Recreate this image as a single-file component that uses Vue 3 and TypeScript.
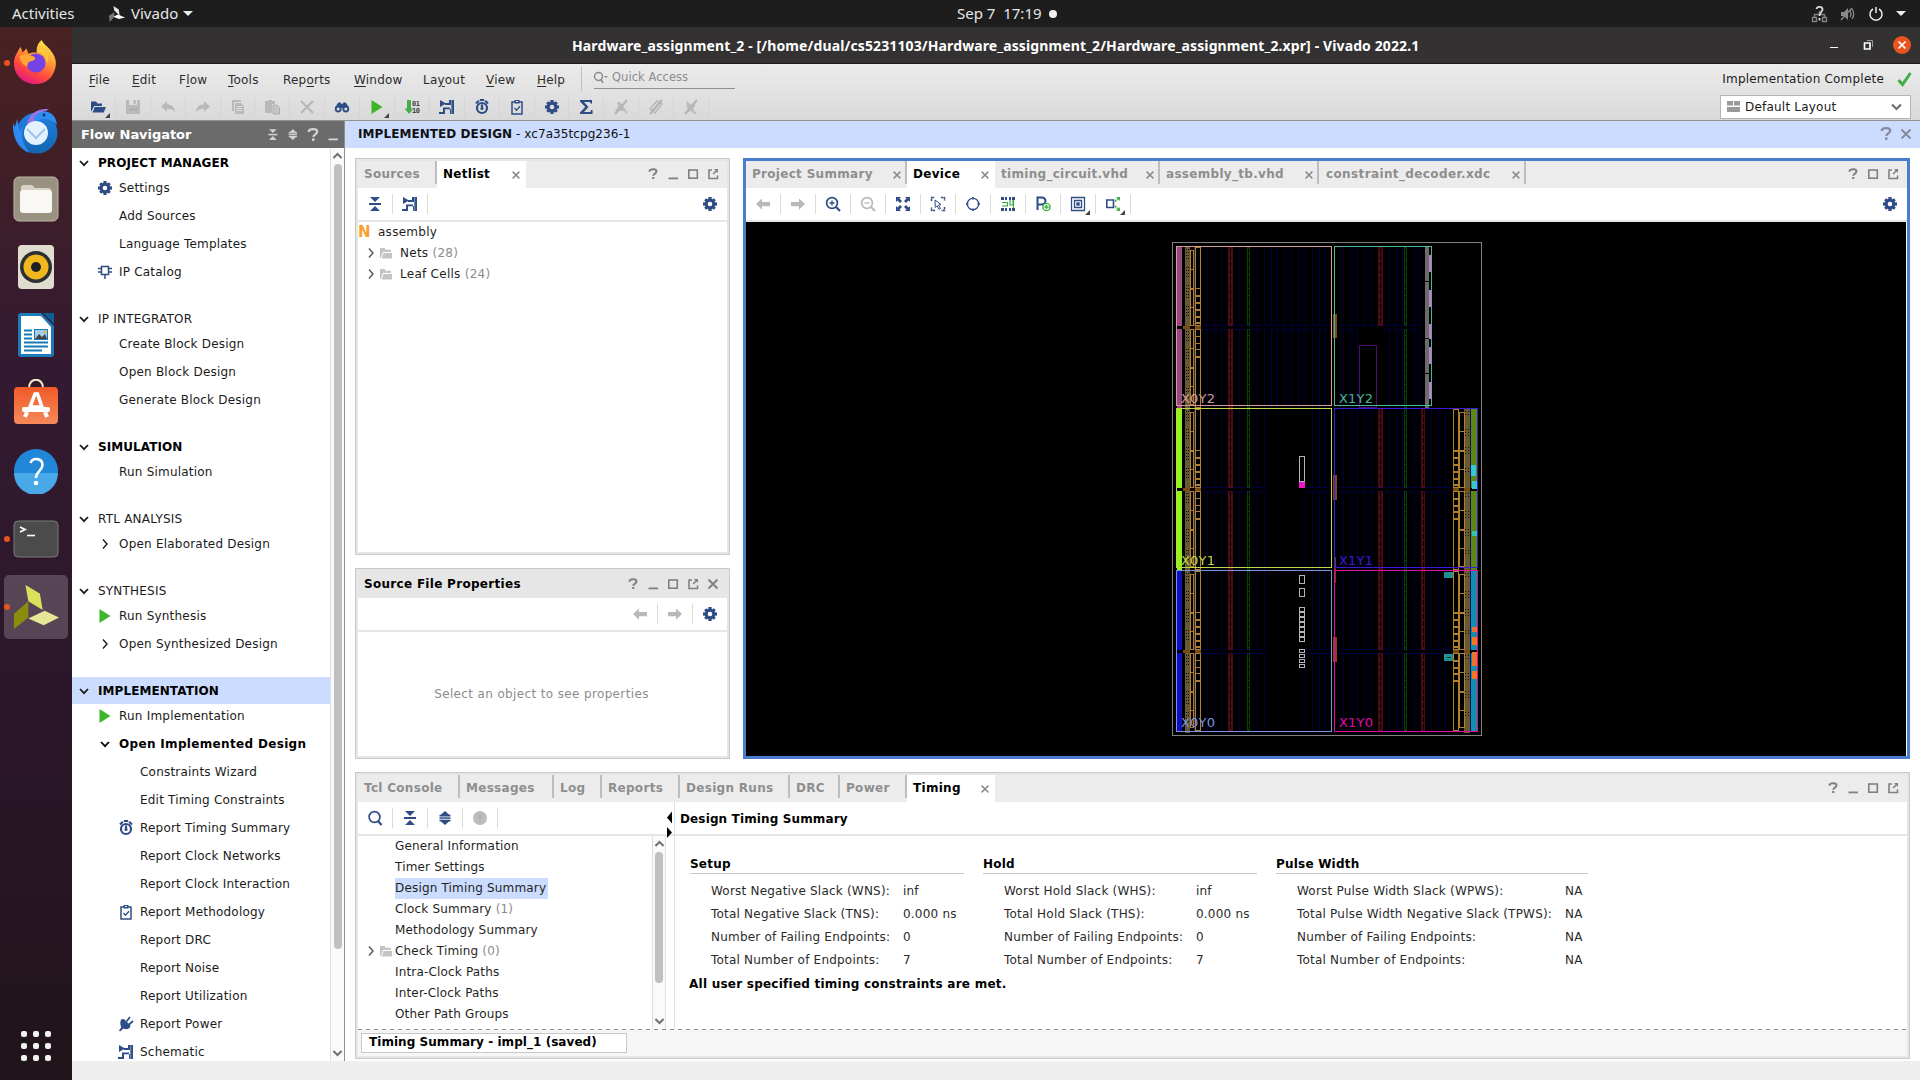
<script setup lang="ts">
const navy = '#2f4d85'
const gear = (c: string) =>
  `<g fill="${c}"><path fill-rule="evenodd" d="M8 2.6a5.4 5.4 0 1 1 0 10.8a5.4 5.4 0 0 1 0-10.8zM8 5.7a2.3 2.3 0 1 0 0 4.6a2.3 2.3 0 0 0 0-4.6z"/><rect x="6.4" y="1" width="3.2" height="3"/><rect x="6.4" y="12" width="3.2" height="3"/><rect x="1" y="6.4" width="3" height="3.2"/><rect x="12" y="6.4" width="3" height="3.2"/><g transform="rotate(45 8 8)"><rect x="6.5" y="1.2" width="3" height="3"/><rect x="6.5" y="11.8" width="3" height="3"/><rect x="1.2" y="6.5" width="3" height="3"/><rect x="11.8" y="6.5" width="3" height="3"/></g></g>`
const collapse = (c: string) => `<g fill="${c}"><path d="M3 1h10L8 6zM3 15h10L8 10z"/><rect x="2" y="7" width="12" height="2"/></g>`
const expand = (c: string) => `<g fill="${c}"><path d="M3.5 5L8 1l4.500 4zM3.500 11h9L8 15z"/><rect x="2.500" y="4.800" width="11" height="1.700"/><rect x="2.500" y="7.300" width="11" height="1.500"/><rect x="2.500" y="9.700" width="11" height="1.700"/></g>`
const arrow = `<path d="M1 8l6-5.500v3.500h8v4.200H7v3.500z" fill="#b9b9b9"/>`
const icons: Record<string, string> = {
  gear: gear(navy),
  collapse: collapse(navy),
  expand: expand(navy),
  collapseLight: `<g transform="translate(1.800 1.500) scale(.76)">${collapse('#d4d4d4')}</g>`,
  expandLight: `<g transform="translate(1.800 1.500) scale(.76)">${expand('#d4d4d4')}</g>`,
  open: `<g fill="${navy}"><path d="M1 13V2.500h5l1.500 2H12V7H4.200z"/><path d="M4.800 8H16l-2.300 5.600H2.500z"/></g>`,
  save: `<g fill="#b9b9b9"><path d="M1 1h3v5h8V1h3v14H1z"/><rect x="8.500" y="1" width="2.300" height="4"/></g><rect x="4" y="10" width="8" height="1" fill="#a8a8a8"/>`,
  undo: `<path d="M1 7.500L7 2v3.500c5 0 7.500 2.500 8 7.500c-2-2.500-4-3.300-8-3.300v3z" fill="#b9b9b9"/>`,
  redo: `<path d="M15 7.500L9 2v3.500c-5 0-7.500 2.500-8 7.500c2-2.500 4-3.300 8-3.300v3z" fill="#b9b9b9"/>`,
  copy: `<path d="M2 1h9v2H4v9H2z" fill="#b9b9b9"/><path d="M5 4h6l3 3v8H5z" fill="#b9b9b9"/><path d="M6.500 7.500h6M6.500 9.500h6M6.500 11.500h6" stroke="#dcdcdc"/>`,
  paste: `<path d="M1 2h3V1h4v1h3v3H8v9H1z" fill="#b9b9b9"/><path d="M9 6h4l2.500 2.500V15H9z" fill="#c4c4c4" stroke="#b0b0b0"/>`,
  del: `<path d="M2 2l12 12M14 2L2 14" stroke="#b5b5b5" stroke-width="2"/>`,
  find: `<g fill="${navy}"><path d="M3.500 4.500Q6.500 2 7.500 5h1Q9.500 2 12.500 4.500L15 9H1z"/><circle cx="4.200" cy="10" r="3.400"/><circle cx="11.800" cy="10" r="3.400"/></g><circle cx="4.200" cy="10" r="1.500" fill="#e2e2e2"/><circle cx="11.800" cy="10" r="1.500" fill="#e2e2e2"/>`,
  run: `<path d="M2.500 1l11 7l-11 7z" fill="#3fb52c"/>`,
  bits: `<path d="M3 1h4v8.500h2.500L5 15L.5 9.500H3z" fill="#44ae4c"/><text x="8" y="7" font-size="7" font-weight="bold" font-family="DejaVu Sans Mono" letter-spacing="-.4" fill="#444">01</text><text x="8" y="14" font-size="7" font-weight="bold" font-family="DejaVu Sans Mono" letter-spacing="-.4" fill="#444">10</text>`,
  schematic: `<g fill="${navy}"><path d="M1 1l6 3.500l-6 3.500z"/><path d="M10 1h5v14h-4v-5h1V6h-6V4h4z"/><path d="M0 13h4V8.500h7v1.800H6V15H0z"/></g><rect x="12.300" y="1" width=".8" height="14" fill="#fff" opacity=".5"/>`,
  timer: `<circle cx="8" cy="9" r="5" fill="none" stroke="${navy}" stroke-width="2.200"/><path d="M8 5.500V10M5.800 1h4.400M2 4.500L4.800 1.800M14 4.500L11.200 1.800" stroke="${navy}" stroke-width="2.200"/><circle cx="8" cy="9.500" r="1.500" fill="${navy}"/>`,
  clip: `<path d="M3 3h10v12H3z" fill="none" stroke="${navy}" stroke-width="1.500"/><rect x="5.500" y="1" width="5" height="3.500" fill="${navy}"/><rect x="7" y="2" width="2" height="1" fill="#fff"/><path d="M5.500 9l2 2.200l3.500-4" fill="none" stroke="${navy}" stroke-width="1.300"/>`,
  sigma: `<path d="M2 1h12v3.500h-1.500L12 3H6l4.500 5L6 13h6.500l.5-2h1.500V15H2v-1.500L7.200 8L2 2.500z" fill="${navy}"/>`,
  off1: `<g fill="#bcbcbc"><path d="M4 3h3l4 5v4H2l3-4z"/></g><path d="M2 15L14 1" stroke="#b4b4b4" stroke-width="2"/><path d="M10 9l4 5" stroke="#bcbcbc" stroke-width="2"/>`,
  off2: `<path d="M2 10L9 2l5 3l-7 9zM4 12l8-9" fill="none" stroke="#b8b8b8" stroke-width="1.500"/><path d="M2 15L14 1" stroke="#b4b4b4" stroke-width="2"/>`,
  off3: `<path d="M3 2l3 2l3 2l3-4v5l-2 3l4 5h-3l-3-3l-3 1z" fill="#bcbcbc"/><path d="M2 15L14 1" stroke="#b4b4b4" stroke-width="2"/>`,
  ip: `<path d="M4.500 2.500h7v8h-7zM8 10.500V15M1 4.500h3M12 4.500h3M1 8h3M12 8h3" fill="none" stroke="${navy}" stroke-width="1.500"/>`,
  plug: `<path d="M3 3.500L6 3l6.500 6.500c0 3-4 5-7 3L2 15.500L1 14.500l2.300-3.200c-1.500-3-1-6-.3-7.800z" fill="${navy}"/><path d="M8.500 5.500l3.500-4.500M11 8.500l4-3.500" stroke="${navy}" stroke-width="1.800"/>`,
  folder: `<g fill="#c4c4c4"><path d="M1 13V3h4.500l1.300 1.700H12V7H3.800L2 13z"/><path d="M4.500 8H13v5.500H2.800z"/></g>`,
  left: arrow,
  right: `<g transform="matrix(-1 0 0 1 16 0)">${arrow}</g>`,
  zoomIn: `<circle cx="7" cy="7" r="5.400" fill="none" stroke="${navy}" stroke-width="1.700"/><path d="M4.500 7h5M7 4.500v5" stroke="${navy}" stroke-width="1.300"/><path d="M11 11l4 4" stroke="${navy}" stroke-width="2.200"/>`,
  zoomOut: `<circle cx="7" cy="7" r="5.400" fill="none" stroke="#b9b9b9" stroke-width="1.700"/><path d="M4.500 7h5" stroke="#b9b9b9" stroke-width="1.300"/><path d="M11 11l4 4" stroke="#b9b9b9" stroke-width="2.200"/>`,
  search: `<circle cx="7.500" cy="7" r="5.400" fill="none" stroke="${navy}" stroke-width="1.700"/><path d="M11 11l3.500 4" stroke="${navy}" stroke-width="2.200"/>`,
  fit: `<g fill="${navy}"><path d="M1 1h5L4.500 2.500L7 5L5 7L2.500 4.500L1 6zM15 1v5l-1.500-1.500L11 7L9 5l2.500-2.500L10 1zM1 15v-5l1.500 1.500L5 9l2 2l-2.500 2.500L6 15zM15 15h-5l1.500-1.500L9 11l2-2l2.500 2.500L15 10z"/></g><rect x="6" y="6" width="4" height="4" fill="#fff"/>`,
  fitSel: `<path d="M1.500 5V1.500H5M11 1.500h3.500V5M14.500 11v3.500H11M5 14.500H1.500V11" fill="none" stroke="${navy}" stroke-width="1.500" stroke-dasharray="2.500 .8"/><path d="M5 4l6 4.500l-2.500.5l2 3.500l-1.500.8l-2-3.500L5.300 11.500z" fill="#fff" stroke="${navy}"/>`,
  target: `<circle cx="8" cy="8" r="5.700" fill="none" stroke="${navy}" stroke-width="1.300"/><path d="M8 1v4M8 11v4M1 8h4M11 8h4" stroke="${navy}" stroke-width="1.500"/><circle cx="8" cy="8" r="4.600" fill="#fff"/>`,
  route: `<g fill="${navy}"><path d="M1 1h3v3H1zM5 1h2v3H5zM9 1h2v3H9zM12 1h3v3h-3zM1 12h3v3H1zM5 12h2v3H5zM9 12h2v3H9zM12 12h3v3h-3z"/></g><path d="M2 6.500h5.500V10H2M10 4v5h3V4M13.500 4v8" fill="none" stroke="#3ca84a" stroke-width="1.200"/>`,
  pblock: `<path d="M2.500 14V1.500H7a3.300 3.300 0 0 1 0 7H3" fill="none" stroke="${navy}" stroke-width="2"/><circle cx="11.500" cy="11" r="3.600" fill="#fff" stroke="#3fae49" stroke-width="1.400"/><path d="M9.300 11h4.400M11.500 8.800v4.400" stroke="#3fae49" stroke-width="1.500"/>`,
  layers: `<path d="M1.500 1.500h13v13h-13zM4.500 4.500h7v7h-7z" fill="none" stroke="${navy}" stroke-width="1.300"/><rect x="6.300" y="6.300" width="3.400" height="3.400" fill="${navy}"/>`,
  expandSel: `<path d="M1.800 4h6.700v7.500H1.800z" fill="none" stroke="${navy}" stroke-width="1.600"/><path d="M10 5.500l3-3M10 10l3 3" stroke="#3fae49" stroke-width="1.600" stroke-dasharray="2 .7"/><path d="M11 1h4v4zM11 15h4v-4z" fill="#3fae49"/>`,
  alert: `<circle cx="8" cy="8" r="7" fill="#bdbdbd"/><path d="M8 4v5M8 10.500v1.500" stroke="#aaa" stroke-width="1.500"/>`,
  help: `<path d="M4.500 5.800V5.200C5 2.800 11.500 2.600 11.500 5.500C11.500 7.500 8.300 7.600 8.200 9.800" fill="none" stroke="currentColor" stroke-width="2"/><rect x="7.100" y="11" width="2.200" height="2" fill="currentColor"/>`,
  helpBig: `<path d="M3.800 5V4.500C4.300 1.500 12.200 1.300 12.200 4.800C12.200 7.200 8.500 7.400 8.300 9.800" fill="none" stroke="currentColor" stroke-width="2.300"/><rect x="7" y="11.400" width="2.600" height="2.400" fill="currentColor"/>`,
  min: `<rect x="3.500" y="11.500" width="9.500" height="1.800" fill="currentColor"/>`,
  max: `<rect x="3.800" y="4" width="8.500" height="8.200" fill="none" stroke="currentColor" stroke-width="1.600"/>`,
  pop: `<path d="M7 4H4v8.500h8.500V9.500" fill="none" stroke="currentColor" stroke-width="1.600"/><path d="M9 3h4v4l-1.500-1.500L8.800 8.600L7.600 7.400l2.900-2.900z" fill="currentColor"/>`,
  close: `<path d="M3.500 3.500l9 9M12.500 3.500l-9 9" stroke="currentColor" stroke-width="1.900"/>`,
  down: `<path d="M4 6l4 4.200L12 6" fill="none" stroke="currentColor" stroke-width="1.800"/>`,
  next: `<path d="M6 3.500l4 4.500l-4 4.500" fill="none" stroke="currentColor" stroke-width="1.400"/>`,
  up: `<path d="M3 10.500L8 5.500l5 5" fill="none" stroke="currentColor" stroke-width="2.400"/>`,
  dn: `<path d="M3 5.500L8 10.500l5-5" fill="none" stroke="currentColor" stroke-width="2.400"/>`,
}

const menus = [
  { a: '', k: 'F', b: 'ile', w: 43 }, { a: '', k: 'E', b: 'dit', w: 47 }, { a: 'F', k: 'l', b: 'ow', w: 49 },
  { a: '', k: 'T', b: 'ools', w: 55 }, { a: 'Rep', k: 'o', b: 'rts', w: 71 }, { a: '', k: 'W', b: 'indow', w: 69 },
  { a: 'La', k: 'y', b: 'out', w: 63 }, { a: '', k: 'V', b: 'iew', w: 51 }, { a: '', k: 'H', b: 'elp', w: 44 },
]
const mainTools = ['open', 'save', 'undo', 'redo', 'copy', 'paste', 'del', 'find', 'run', 'bits', 'schematic', 'timer', 'clip', 'gear', 'sigma', 'off1', 'off2', 'off3']
const devTools = ['left', 'right', 'zoomIn', 'zoomOut', 'fit', 'fitSel', 'target', 'route', 'pblock', 'layers', 'expandSel']

interface NavItem { t: string; i?: string; b?: boolean; s?: boolean }
const nav: { t: string; b?: boolean; sel?: boolean; items: NavItem[] }[] = [
  { t: 'PROJECT MANAGER', b: true, items: [{ t: 'Settings', i: 'gear' }, { t: 'Add Sources' }, { t: 'Language Templates' }, { t: 'IP Catalog', i: 'ip' }] },
  { t: 'IP INTEGRATOR', items: [{ t: 'Create Block Design' }, { t: 'Open Block Design' }, { t: 'Generate Block Design' }] },
  { t: 'SIMULATION', b: true, items: [{ t: 'Run Simulation' }] },
  { t: 'RTL ANALYSIS', items: [{ t: 'Open Elaborated Design', i: 'next' }] },
  { t: 'SYNTHESIS', items: [{ t: 'Run Synthesis', i: 'run' }, { t: 'Open Synthesized Design', i: 'next' }] },
  {
    t: 'IMPLEMENTATION', b: true, sel: true, items: [
      { t: 'Run Implementation', i: 'run' }, { t: 'Open Implemented Design', i: 'down', b: true },
      { t: 'Constraints Wizard', s: true }, { t: 'Edit Timing Constraints', s: true }, { t: 'Report Timing Summary', s: true, i: 'timer' },
      { t: 'Report Clock Networks', s: true }, { t: 'Report Clock Interaction', s: true }, { t: 'Report Methodology', s: true, i: 'clip' },
      { t: 'Report DRC', s: true }, { t: 'Report Noise', s: true }, { t: 'Report Utilization', s: true },
      { t: 'Report Power', s: true, i: 'plug' }, { t: 'Schematic', s: true, i: 'schematic' },
    ],
  },
]

interface Tab { t: string; w: number; on?: boolean; x?: boolean; sep?: boolean }
const netTabs: Tab[] = [{ t: 'Sources', w: 79, sep: true }, { t: 'Netlist', w: 89, on: true, x: true }]
const devTabs: Tab[] = [
  { t: 'Project Summary', w: 161, x: true, sep: true }, { t: 'Device', w: 88, on: true, x: true },
  { t: 'timing_circuit.vhd', w: 165, x: true, sep: true }, { t: 'assembly_tb.vhd', w: 159, x: true, sep: true }, { t: 'constraint_decoder.xdc', w: 207, x: true, sep: true },
]
const botTabs: Tab[] = [
  { t: 'Tcl Console', w: 102, sep: true }, { t: 'Messages', w: 94, sep: true }, { t: 'Log', w: 48, sep: true }, { t: 'Reports', w: 78, sep: true },
  { t: 'Design Runs', w: 110, sep: true }, { t: 'DRC', w: 50, sep: true }, { t: 'Power', w: 67, sep: true }, { t: 'Timing', w: 88, on: true, x: true },
]
const timingTree = [
  { t: 'General Information' }, { t: 'Timer Settings' }, { t: 'Design Timing Summary', sel: true }, { t: 'Clock Summary', n: '(1)' },
  { t: 'Methodology Summary' }, { t: 'Check Timing', n: '(0)', f: true }, { t: 'Intra-Clock Paths' }, { t: 'Inter-Clock Paths' }, { t: 'Other Path Groups' },
]
const summary = [
  { t: 'Setup', w: 274, l: 192, rows: [['Worst Negative Slack (WNS):', 'inf'], ['Total Negative Slack (TNS):', '0.000 ns'], ['Number of Failing Endpoints:', '0'], ['Total Number of Endpoints:', '7']] },
  { t: 'Hold', w: 274, l: 192, rows: [['Worst Hold Slack (WHS):', 'inf'], ['Total Hold Slack (THS):', '0.000 ns'], ['Number of Failing Endpoints:', '0'], ['Total Number of Endpoints:', '7']] },
  { t: 'Pulse Width', w: 312, l: 268, rows: [['Worst Pulse Width Slack (WPWS):', 'NA'], ['Total Pulse Width Negative Slack (TPWS):', 'NA'], ['Number of Failing Endpoints:', 'NA'], ['Total Number of Endpoints:', 'NA']] },
]

/* Device floorplan: six clock regions, each split in two half-rows. */
interface R { x: number; y: number; w: number; h: number; f?: string; s?: string }
const fills: R[] = []
const outlines: R[] = []
const fill = (x: number, y: number, w: number, h: number, f: string) => fills.push({ x, y, w, h, f })
const box = (x: number, y: number, w: number, h: number, s: string) => outlines.push({ x: x + 0.5, y: y + 0.5, w: w - 1, h: h - 1, s })
const halves = [[247, 326], [329, 408], [409, 488], [491, 570], [571, 650], [653, 731]]
const leftBar = ['#9b4884', '#9b4884', '#92f41a', '#92f41a', '#0f0fbe', '#0f0fbe']
const amber = '#b0802c'
halves.forEach(([y0, y1], i) => {
  const h = y1 - y0
  const top = i < 2
  const xs = top ? [1207, 1214, 1221, 1239, 1257, 1264, 1271, 1277, 1284, 1291, 1298, 1305, 1312, 1319, 1325] : [1207, 1214, 1221, 1239, 1257, 1264, 1312, 1319, 1325]
  if (i === 3 || i === 5) xs.push(1305)
  const rx = top ? [1343, 1350, 1357, 1364, 1371, 1389, 1396, 1402, 1414, 1420] : [1343, 1350, 1357, 1364, 1371, 1389, 1396, 1402, 1414, 1431, 1438, 1445]
  for (const x of xs.concat(rx)) if (!(i === 1 && x > 1357 && x < 1380)) fill(x, y0, 1, h, '#00003c')
  const yy = i % 2 ? y0 : y1 - 1
  fill(1201, yy, top ? 130 : 64, 1, '#00003c')
  if (!top) fill(1305, yy, 26, 1, '#00003c')
  if (i === 1) { fill(1337, yy, 20, 1, '#00003c'); fill(1382, yy, 39, 1, '#00003c') } else fill(1337, yy, top ? 84 : 116, 1, '#00003c')
  fill(1177, y0, 5, h, leftBar[i])
  fill(1194, y0, 1, h, '#28285c')
  fill(1185, y0 - 1, 5, h + 3, '#655936')
  for (let y = y0 + 2; y < y1 - 2; y += 3) if ((y - y0) % 19 < 13) { fill(1186, y, 1, 1, '#0c0a06'); fill(1188, y, 1, 1, '#0c0a06') }
  for (const x of [1228, 1378].concat(top ? [] : [1421])) {
    if (i === 1 && x === 1378) continue
    fill(x, y0, x === 1421 ? 4 : 5, h, '#4a0a16')
    for (let y = y0 + 1; y < y1 - 3; y += 7) fill(x + 2, y, 1, 5, '#080003')
  }
  for (const x of [1247, 1404]) {
    box(x, y0, 3, h, '#083f08')
    for (let y = y0 + 6; y < y1; y += 7) fill(x, y, 3, 1, '#0a420a')
  }
  const odd = i % 2 === 1
  box(1190, odd ? y0 : y0 + 3, 4, h - 3, amber)
  for (const d of [22, 41, 60]) fill(1190, y0 + d - (odd ? 3 : 0), 4, d === 41 ? 2 : 1, amber)
  box(1195, y0, 6, h, amber)
  for (const d of odd ? [7, 14, 20, 27] : [41, 48, 55, 62, 69, 75]) fill(1195, y0 + d, 6, d > 47 || d === 27 ? 2 : 1, amber)
  if (!top) {
    box(1453, y0, 6, h, amber)
    for (const d of odd ? [7, 14, 20, 27] : [41, 48, 55, 62, 69, 75]) fill(1453, y0 + d, 6, 2, amber)
    box(1459, odd ? y0 : y0 + 3, 6, h - 3, amber)
    for (const d of [22, 41, 60]) fill(1459, y0 + d - (odd ? 3 : 0), 5, d === 41 ? 2 : 1, amber)
    fill(1464, y0 - 1, 6, h + 3, '#655936')
    for (let y = y0 + 2; y < y1 - 3; y += 3) if ((y - y0) % 19 < 8) { fill(1465, y, 1, 1, '#0c0a06'); fill(1468, y, 1, 1, '#0c0a06') }
    fill(1471, y0, 6, h, i < 4 ? '#5c8812' : '#128fac')
    fill(1470, y0, 1, h, '#111160')
  }
})
for (const y of [326, 488, 650]) {
  fill(1177, y, 7, y === 326 ? 3 : 2, '#000')
  fill(1183, y, 7, 3, '#7a4a10')
  fill(1195, y, 6, 3, '#7a4a10')
  if (y > 400) { fill(1453, y, 6, 3, '#7a4a10'); fill(1464, y, 6, 3, '#7a4a10'); fill(1471, y, 6, 2, '#000') }
}
fill(1425, 247, 4, 34, '#6c6c6c'); fill(1425, 282, 4, 56, '#6c6c6c'); fill(1425, 339, 4, 34, '#6c6c6c'); fill(1425, 374, 4, 34, '#6c6c6c')
for (const y of [255, 290, 324, 347, 382]) fill(1429, y, 2, y === 324 ? 15 : 17, '#d874cf')
fill(1333, 314, 4, 24, '#7a4a18'); fill(1333, 475, 4, 25, '#7a4a18'); fill(1334, 557, 2, 26, '#6a3a30'); fill(1333, 637, 4, 25, '#8a4020')
box(1359, 345, 18, 63, '#4c0c6c')
box(1299, 456, 6, 26, '#b4b4b4')
fill(1299, 481, 6, 7, '#f414c8')
box(1299, 575, 6, 9, '#b4b4b4'); box(1299, 588, 6, 9, '#b4b4b4')
for (let n = 0; n < 7; n++) box(1299, 607 + n * 5, 6, 5, '#b4b4b4')
for (let n = 0; n < 4; n++) box(1299, 649 + n * 5, 6, 4, '#b4b4b4')
fill(1444, 572, 10, 6, '#219090'); fill(1444, 654, 10, 7, '#219090'); fill(1447, 657, 4, 1, '#063838')
fill(1471, 465, 5, 11, '#34c8cc'); fill(1472, 481, 5, 8, '#34c8cc'); fill(1472, 531, 5, 5, '#34c8a8')
fill(1472, 627, 5, 5, '#e8762a'); fill(1472, 637, 5, 8, '#f47818'); fill(1472, 652, 5, 14, '#e8762a'); fill(1472, 671, 5, 8, '#f47818')

const regions = [
  { n: 'X0Y2', x: 1176, y: 246, w: 156, h: 160, b: 403, c: '#d69c96' }, { n: 'X1Y2', x: 1334, y: 246, w: 98, h: 160, b: 403, c: '#48b69c' },
  { n: 'X0Y1', x: 1176, y: 408, w: 156, h: 160, b: 565, c: '#c2d848' }, { n: 'X1Y1', x: 1334, y: 408, w: 144, h: 160, b: 565, c: '#4018d8' },
  { n: 'X0Y0', x: 1176, y: 570, w: 156, h: 162, b: 727, c: '#7c94d8' }, { n: 'X1Y0', x: 1334, y: 570, w: 144, h: 162, b: 727, c: '#e00ca0' },
]
</script>

<template>
  <div class="desk">
    <header class="top">
      <span class="act">Activities</span>
      <svg class="vv" viewBox="0 0 20 20"><path d="M6 1l6 4l1 7l-6-6z" fill="#e8e8e8" /><path d="M1 12l6-4v5l-5 6z" fill="#777" /><path d="M6 13l5-2.500l8 3.500l-7 1.500z" fill="#fff" /></svg>
      <span class="app">Vivado</span><i class="tri" />
      <span class="clock">Sep 7&nbsp; 17:19</span><i class="dot" />
      <div class="tray">
        <svg width="17" height="18" viewBox="0 0 17 18"><path d="M1.500 12.500h4v4h-4zM11.500 12.500h4v4h-4zM3.500 12V9.500h10V12M8.500 9V6" fill="none" stroke="#858585" stroke-width="1.300" /><path d="M5.500 4C6 1 11.500 1 11.500 4.500C11.500 7 8.500 7 8.500 11M8.500 13v2.500" fill="none" stroke="#d8d8d8" stroke-width="1.800" /></svg>
        <svg width="16" height="16" viewBox="0 0 16 16"><path d="M1 6h3l4-4v12l-4-4H1z" fill="#8a8a8a" /><path d="M10 5q2 3 0 6M12 3q3.500 5 0 10M1 14L12 2" fill="none" stroke="#8a8a8a" stroke-width="1.300" /></svg>
        <svg width="16" height="16" viewBox="0 0 16 16"><path d="M5 3a6 6 0 1 0 6 0M8 1v6" fill="none" stroke="#eee" stroke-width="1.500" /></svg>
        <i class="tri" />
      </div>
    </header>

    <div class="body">
      <aside class="dock">
        <div class="di first"><i class="run" />
          <svg viewBox="0 0 48 48"><defs>
            <linearGradient id="ff" x1=".8" y1="0" x2=".3" y2="1"><stop offset="0" stop-color="#fff44f" /><stop offset=".35" stop-color="#ffa436" /><stop offset=".7" stop-color="#ff4a3a" /><stop offset="1" stop-color="#e31587" /></linearGradient>
            <linearGradient id="tb" x1="0" y1="0" x2="0" y2="1"><stop offset="0" stop-color="#1f7fe0" /><stop offset="1" stop-color="#1565b0" /></linearGradient>
            <linearGradient id="sw" x1="0" y1="0" x2="0" y2="1"><stop offset="0" stop-color="#f05a28" /><stop offset="1" stop-color="#f58a5a" /></linearGradient></defs>
            <path d="M30 1c2 5 6 6 10 12c4 5 6 11 4 18C41 41 34 47 24 47C11 47 1 38 1 25C1 19 4 14 8 8l2 6l4-4l2 5c3-1 6-1 9-1C24 9 26 4 30 1z" fill="url(#ff)" /><circle cx="24" cy="25" r="10" fill="#7542e5" /><path d="M7 18c6-4 10-1 14 0c3 1 3 4-1 5c-4 0-5 3-5 6c-5-2-8-6-8-11z" fill="#ffa436" /><path d="M24 13c7 0 12 6 11 13c4-7 0-14-6-16z" fill="#ffc83d" /></svg></div>
        <div class="di"><svg viewBox="0 0 48 48" class="big"><circle cx="25" cy="26" r="20.500" fill="url(#tb)" /><path d="M1 16C0 30 6 42 18 46C10 38 8 26 12 16L8 24L5 12L3 20z" fill="#2c8af0" /><path d="M15 18C16 7 25 1 37 2L34 4C28 5 24 8 23 14z" fill="#9a72e8" /><path d="M22 10C30 0 44 4 45 18C38 10 30 10 22 16z" fill="#2f8df0" /><circle cx="24" cy="26" r="12" fill="#e4f2ff" /><path d="M15 22l9 9l9-9" fill="none" stroke="#9fc4ee" stroke-width="2" /><circle cx="32" cy="8" r="1.500" fill="#102f70" /></svg></div>
        <div class="di"><svg viewBox="0 0 46 46"><rect x="1" y="1" width="44" height="44" rx="5" fill="#9a9280" stroke="#bdb6a6" /><path d="M8 12q0-3 3-3h8l3 3h13q3 0 3 3v8H8z" fill="#d8d3c6" /><rect x="7" y="14" width="32" height="23" rx="3" fill="#faf8f5" /></svg></div>
        <div class="di"><svg viewBox="0 0 46 46"><rect x="5" y="1" width="36" height="44" rx="4" fill="#e0dccf" /><circle cx="23" cy="23" r="16" fill="#2c2f33" /><circle cx="23" cy="23" r="12.500" fill="#f0b81c" /><circle cx="23" cy="23" r="5" fill="#1c2024" /></svg></div>
        <div class="di"><svg viewBox="0 0 46 46"><path d="M5 4q0-3 3-3h20l13 13v28q0 3-3 3H8q-3 0-3-3z" fill="#1b7bb8" /><path d="M8 4h20l10 11v27H8z" fill="#fff" /><path d="M30 1h11v11z" fill="#0e5f96" /><path d="M11 18.500h8M11 22.500h8M11 26.500h8M11 30.500h24M11 34.500h24M11 38.500h18" stroke="#1878b8" stroke-width="2" /><rect x="21.500" y="17.500" width="13" height="10" fill="#9fd0ee" stroke="#1878b8" /><path d="M22 27l4-5l3 3l3-3l2 5z" fill="#444" /><circle cx="32" cy="20" r="1.500" fill="#f0b020" /></svg></div>
        <div class="di soft"><svg viewBox="0 0 46 46"><path d="M16 9c0-11 14-11 14 0" fill="none" stroke="#f4ead0" stroke-width="2" /><rect x="1" y="8" width="44" height="37" rx="4" fill="url(#sw)" /><path d="M22 15h2.500l4.500 13H17z" fill="none" stroke="#fff" stroke-width="3.500" /><rect x="9" y="28" width="28" height="5" rx="2" fill="#fff" /><path d="M14 33l-2 5M32 33l2 5" stroke="#fff" stroke-width="4" /></svg></div>
        <div class="di"><svg viewBox="0 0 46 46"><circle cx="23" cy="23" r="22" fill="#2187d8" /><path d="M1 25h44a22 22 0 0 1-44 0z" fill="#48a8e8" /><path d="M17.500 15c2-6 12-5 12 2c0 6-6.500 6-6.500 13" fill="none" stroke="#fff" stroke-width="2.600" /><circle cx="23" cy="35" r="2.300" fill="#fff" /></svg></div>
        <div class="di"><i class="run" /><svg viewBox="0 0 46 46"><rect x="1" y="5" width="44" height="36" rx="4" fill="#4b4b4b" stroke="#7b7b7b" /><path d="M7 11l5 2.500l-5 2.500" fill="none" stroke="#fff" stroke-width="1.800" /><path d="M14 19.500h8" stroke="#fff" stroke-width="1.600" /></svg></div>
        <div class="di"><i class="run" /><span class="tile"><svg viewBox="0 0 48 48"><path d="M13 1l15 9l3 17L16 18z" fill="#dde05a" /><path d="M1 31l15-13v17L1 47z" fill="#8c8c0c" /><path d="M16 36l17-8l15 7l-16 8z" fill="#e6e898" /></svg></span></div>
        <div class="apps"><i v-for="n in 9" :key="n" /></div>
      </aside>

      <div class="win">
        <div class="title"><b>Hardware_assignment_2 - [/home/dual/cs5231103/Hardware_assignment_2/Hardware_assignment_2.xpr] - Vivado 2022.1</b>
          <div class="wctl"><i class="wmin" /><svg width="12" height="12" viewBox="0 0 12 12"><path d="M1.500 4h5.500v6H1.500z" fill="none" stroke="#fff" stroke-width="1.700" /><path d="M4 1.500h5.500V8" fill="none" stroke="#999" /></svg><span class="wx"><svg width="18" height="18" viewBox="0 0 18 18"><path d="M5.500 5.500l7 7M12.500 5.500l-7 7" stroke="#fff" stroke-width="1.700" /></svg></span></div>
        </div>

        <div class="bars">
          <div class="menu">
            <span v-for="m in menus" :key="m.k" :style="{ width: m.w + 'px' }">{{ m.a }}<u>{{ m.k }}</u>{{ m.b }}</span>
            <div class="qa"><svg width="15" height="13" viewBox="0 0 15 13"><circle cx="5.500" cy="5.500" r="4" fill="none" stroke="#8a8a8a" stroke-width="1.500" /><path d="M7.500 8l2.500 4" stroke="#8a8a8a" stroke-width="1.500" /><path d="M11 5h4l-2 2z" fill="#8a8a8a" /></svg><span>Quick Access</span></div>
            <div class="impl">Implementation Complete<svg width="15" height="15" viewBox="0 0 15 15"><path d="M1.500 8l4 4.500L13.500 1" fill="none" stroke="#3fb046" stroke-width="3" /></svg></div>
          </div>
          <div class="tools">
            <span v-for="t in mainTools" :key="t" class="tool"><svg class="ic" viewBox="0 0 16 16" v-html="icons[t]" /><i v-if="t === 'open' || t === 'run'" class="cor" /></span>
            <div class="sel"><svg width="13" height="11" viewBox="0 0 13 11"><path d="M0 0h6v4.500H0zM7 0h6v4.500H7zM0 6h13v5H0z" fill="#9a9a9a" /></svg><span>Default Layout</span><svg width="11" height="8" viewBox="0 0 11 8"><path d="M1 1.500l4.500 4.500L10 1.500" fill="none" stroke="#6f6f6f" stroke-width="2.200" /></svg></div>
          </div>
        </div>

        <div class="main">
          <section class="nav">
            <div class="nh"><b>Flow Navigator</b><svg v-for="n in ['collapseLight', 'expandLight', 'helpBig', 'min']" :key="n" class="ic" viewBox="0 0 16 16" v-html="icons[n]" /></div>
            <div class="nb">
              <div class="list">
                <div v-for="g in nav" :key="g.t" class="grp">
                  <div class="gh" :class="{ b: g.b, on: g.sel }"><svg class="ic" viewBox="0 0 16 16" v-html="icons.down" /><span>{{ g.t }}</span></div>
                  <div v-for="i in g.items" :key="i.t" class="gi" :class="{ b: i.b, s: i.s }"><svg class="ic" viewBox="0 0 16 16" v-html="i.i ? icons[i.i] : ''" /><span>{{ i.t }}</span></div>
                </div>
              </div>
              <div class="sb"><svg class="ic" viewBox="0 0 16 16" v-html="icons.up" /><i style="height: 785px" /><svg class="ic end" viewBox="0 0 16 16" v-html="icons.dn" /></div>
            </div>
          </section>

          <section class="work">
            <div class="ih"><span><b>IMPLEMENTED DESIGN</b> - xc7a35tcpg236-1</span><svg class="ic" viewBox="0 0 16 16" v-html="icons.helpBig" /><svg class="ic" viewBox="0 0 16 16" v-html="icons.close" /></div>
            <div class="panels">
              <div class="row">
                <div class="col">
                  <div class="panel net">
                    <div class="tabs"><div v-for="t in netTabs" :key="t.t" class="tab" :class="t" :style="{ width: t.w + 'px' }"><span>{{ t.t }}</span><svg v-if="t.x" viewBox="0 0 16 16" v-html="icons.close" /></div>
                      <div class="ctl"><svg v-for="n in ['help', 'min', 'max', 'pop']" :key="n" class="ic" viewBox="0 0 16 16" v-html="icons[n]" /></div></div>
                    <div class="ptools"><span v-for="t in ['collapse', 'schematic']" :key="t" class="pt"><svg class="ic" viewBox="0 0 16 16" v-html="icons[t]" /></span><svg class="ic gr" viewBox="0 0 16 16" v-html="icons.gear" /></div>
                    <div class="tree">
                      <div class="tr"><b class="en">N</b>assembly</div>
                      <div class="tr in"><svg class="ic cv" viewBox="0 0 16 16" v-html="icons.next" /><svg class="ic fo" viewBox="0 0 16 16" v-html="icons.folder" />Nets <em>(28)</em></div>
                      <div class="tr in"><svg class="ic cv" viewBox="0 0 16 16" v-html="icons.next" /><svg class="ic fo" viewBox="0 0 16 16" v-html="icons.folder" />Leaf Cells <em>(24)</em></div>
                    </div>
                  </div>
                  <div class="panel props">
                    <div class="ph"><b>Source File Properties</b><div class="ctl"><svg v-for="n in ['help', 'min', 'max', 'pop', 'close']" :key="n" class="ic" viewBox="0 0 16 16" v-html="icons[n]" /></div></div>
                    <div class="ptools right"><span v-for="t in ['left', 'right']" :key="t" class="pt"><svg class="ic" viewBox="0 0 16 16" v-html="icons[t]" /></span><svg class="ic gr" viewBox="0 0 16 16" v-html="icons.gear" /></div>
                    <div class="empty">Select an object to see properties</div>
                  </div>
                </div>
                <div class="panel dev">
                  <div class="tabs"><div v-for="t in devTabs" :key="t.t" class="tab" :class="t" :style="{ width: t.w + 'px' }"><span>{{ t.t }}</span><svg v-if="t.x" viewBox="0 0 16 16" v-html="icons.close" /></div>
                    <div class="ctl"><svg v-for="n in ['help', 'max', 'pop']" :key="n" class="ic" viewBox="0 0 16 16" v-html="icons[n]" /></div></div>
                  <div class="ptools"><span v-for="t in devTools" :key="t" class="pt"><svg class="ic" viewBox="0 0 16 16" v-html="icons[t]" /><i v-if="t === 'layers' || t === 'expandSel'" class="cor" /></span><svg class="ic gr" viewBox="0 0 16 16" v-html="icons.gear" /></div>
                  <svg class="chip" width="1160" height="534" viewBox="746 222 1160 534" shape-rendering="crispEdges">
                    <rect x="746" y="222" width="1160" height="534" />
                    <rect x="1172.500" y="242.500" width="309" height="493" fill="none" stroke="#808080" />
                    <rect v-for="(r, i) in fills" :key="'f' + i" :x="r.x" :y="r.y" :width="r.w" :height="r.h" :fill="r.f" />
                    <rect v-for="(r, i) in outlines" :key="'o' + i" :x="r.x" :y="r.y" :width="r.w" :height="r.h" fill="none" :stroke="r.s" />
                    <g v-for="r in regions" :key="r.n"><rect :x="r.x + 0.5" :y="r.y + 0.5" :width="r.w - 1" :height="r.h - 1" fill="none" :stroke="r.c" />
                      <text :x="r.x + 5" :y="r.b" :fill="r.c" textLength="34">{{ r.n }}</text></g>
                  </svg>
                </div>
              </div>

              <div class="panel bot">
                <div class="tabs"><div v-for="t in botTabs" :key="t.t" class="tab" :class="t" :style="{ width: t.w + 'px' }"><span>{{ t.t }}</span><svg v-if="t.x" viewBox="0 0 16 16" v-html="icons.close" /></div>
                  <div class="ctl"><svg v-for="n in ['help', 'min', 'max', 'pop']" :key="n" class="ic" viewBox="0 0 16 16" v-html="icons[n]" /></div></div>
                <div class="split">
                  <div class="tl">
                    <div class="ptools"><span v-for="t in ['search', 'collapse', 'expand', 'alert']" :key="t" class="pt"><svg class="ic" viewBox="0 0 16 16" v-html="icons[t]" /></span></div>
                    <div class="tt">
                      <div class="tree"><div v-for="t in timingTree" :key="t.t" class="tr tm"><svg v-if="t.f" class="ic cv" viewBox="0 0 16 16" v-html="icons.next" /><svg v-if="t.f" class="ic fo" viewBox="0 0 16 16" v-html="icons.folder" /><span :class="{ hl: t.sel, tx: !t.f }">{{ t.t }}<em v-if="t.n" class="cnt">{{ t.n }}</em></span></div></div>
                      <div class="sb"><svg class="ic" viewBox="0 0 16 16" v-html="icons.up" /><i style="height: 131px" /><svg class="ic end" viewBox="0 0 16 16" v-html="icons.dn" /></div>
                    </div>
                  </div>
                  <div class="gut"><svg width="9" height="40" viewBox="0 0 9 40"><path d="M6 9.500v12l-5-6zM1 25v11l5-5.500z" /></svg></div>
                  <div class="sm">
                    <div class="sh">Design Timing Summary</div>
                    <div class="cols">
                      <div v-for="c in summary" :key="c.t" :style="{ width: c.w + 'px' }"><h4>{{ c.t }}</h4>
                        <div v-for="r in c.rows" :key="r[0]" class="sr"><span :style="{ width: c.l + 'px' }">{{ r[0] }}</span><span>{{ r[1] }}</span></div></div>
                    </div>
                    <b class="met">All user specified timing constraints are met.</b>
                  </div>
                </div>
                <div class="foot"><b>Timing Summary - impl_1 (saved)</b></div>
              </div>
            </div>
          </section>
        </div>
        <div class="status" />
      </div>
    </div>
  </div>
</template>

<style>
body { margin: 0; overflow: hidden; }
</style>
<style scoped>
* { box-sizing: border-box; }
.desk { width: 1920px; height: 1080px; display: flex; flex-direction: column; font: 12px/16px "DejaVu Sans", sans-serif; letter-spacing: .21px; color: #1a1a1a; white-space: nowrap; overflow: hidden; }
.ic { width: 16px; height: 16px; flex: none; display: block; }
svg { flex: none; }
.top { height: 27px; background: #1d1d1d; color: #e6e6e6; display: flex; align-items: center; font: 15px/27px "Noto Sans", sans-serif; letter-spacing: 0; flex: none; }
.act { width: 97px; padding-left: 12px; }
.vv { width: 18px; height: 18px; margin-right: 4px; margin-left: 11px; }
.app { width: 50px; margin-left: 1px; }
.tri { border: 5px solid transparent; border-top: 5px solid #eee; border-bottom: 0; }
.app + .tri { margin-left: 2px; }
.clock { margin-left: 764px; width: 84px; }
.dot { width: 8px; height: 8px; border-radius: 50%; background: #f2f2f2; margin-left: 8px; }
.tray { margin-left: auto; display: flex; align-items: center; gap: 12px; margin-right: 14px; }
.body { flex: 1; display: flex; min-height: 0; }
.dock { width: 72px; display: flex; flex-direction: column; background: linear-gradient(#492222, #341a30 32%, #2b1629 65%, #20141a); }
.di { height: 68px; display: flex; align-items: center; justify-content: center; position: relative; flex: none; }
.di.first { height: 70px; }
.di.soft { padding-bottom: 3px; }
.di svg { width: 46px; height: 46px; }
.di svg.big { width: 48px; height: 48px; }
.run { position: absolute; left: 4px; top: 31px; width: 6px; height: 6px; border-radius: 50%; background: #e95420; }
.first .run { top: 33px; }
.tile { width: 64px; height: 64px; border-radius: 5px; background: rgba(255, 255, 255, .2); display: flex; align-items: center; justify-content: center; }
.apps { display: grid; grid-template-columns: repeat(3, 6px); gap: 6px; margin: auto 0 19px 21px; }
.apps i { width: 6px; height: 6px; border-radius: 2px; background: #f2f2f2; }
.win { flex: 1; display: flex; flex-direction: column; background: #fff; min-width: 0; }
.title { height: 37px; background: #343132; border-bottom: 1px solid #1c1a1a; color: #fff; display: flex; align-items: center; padding-left: 500px; font: 14px/36px "Noto Sans", sans-serif; letter-spacing: .12px; flex: none; }
.title b { font-weight: 700; padding-top: 1px; }
.wctl { margin-left: auto; display: flex; align-items: center; padding-right: 9px; }
.wmin { width: 8px; height: 1px; background: #fff; margin: 5px 25px 0 0; }
.wctl > svg { margin-right: 18px; }
.wx { width: 18px; height: 18px; border-radius: 50%; background: #e95420; display: flex; }
.bars { height: 57px; background: linear-gradient(#ebebeb, #d9d9d9); border-bottom: 1px solid #929292; flex: none; }
.menu { height: 32px; display: flex; align-items: center; padding-left: 17px; color: #2c2c2c; }
.menu > span { flex: none; padding-bottom: 1px; }
.menu u { text-underline-offset: 2px; }
.qa { align-self: flex-start; margin-top: 3px; height: 24px; border-left: 1px solid #bdbdbd; padding-left: 11px; color: #8c8c8c; font-size: 11.500px; letter-spacing: .05px; display: flex; background: linear-gradient(#8f8f8f, #8f8f8f) 12px 21px / 142px 1px no-repeat; }
.qa svg { margin-top: 4px; }
.qa span { width: 127px; padding-left: 4px; height: 22px; line-height: 21px; }
.impl { margin-left: auto; display: flex; align-items: center; margin-right: 8px; margin-top: -2px; color: #1c1c1c; }
.impl svg { margin-left: 13px; }
.tools { height: 22px; display: flex; align-items: center; padding-left: 9px; }
.tool { width: 34.9px; height: 20px; display: flex; align-items: center; justify-content: center; border-right: 1px solid #d4d4d4; position: relative; }
.cor { position: absolute; right: 5px; bottom: -1px; border-left: 5px solid transparent; border-bottom: 5px solid #444; }
.sel { margin-left: auto; margin-right: 9px; width: 191px; height: 24px; background: #fff; border: 1px solid #b4b4b4; display: flex; align-items: center; padding: 0 8px 1px 6px; }
.sel span { flex: 1; margin-left: 5px; }
.main { flex: 1; display: flex; min-height: 0; }
.nav { width: 273px; border-right: 1px solid #8f8f8f; display: flex; flex-direction: column; }
.nh { height: 27px; background: #6b6b6b; color: #d4d4d4; display: flex; align-items: center; padding: 0 3px 0 9px; gap: 4px; flex: none; }
.nh b { flex: 1; color: #fff; font-size: 13px; letter-spacing: -.05px; }
.nb { flex: 1; display: flex; min-height: 0; }
.list { flex: 1; overflow: hidden; padding-top: 1px; }
.grp { margin-bottom: 19px; }
.gh { height: 27px; margin-bottom: -2px; display: flex; align-items: center; padding-left: 4px; }
.gh span { margin-left: 6px; }
.gh .ic { color: #1a1a1a; }
.gi { height: 28px; display: flex; align-items: center; padding-left: 25px; }
.gi.s { padding-left: 46px; }
.gi span { margin-left: 6px; }
.b { font-weight: 700; color: #000; letter-spacing: .08px; }
.gi.b { letter-spacing: .33px; }
.on { background: #cbdcfe; }
.sb { width: 14px; border-left: 1px solid #e0e0e0; background: #fafafa; display: flex; flex-direction: column; align-items: center; color: #707070; }
.sb .ic { width: 13px; height: 16px; }
.sb i { width: 8px; border-radius: 4px; background: #c0c0c0; }
.sb .end { margin-top: auto; }
.work { flex: 1; display: flex; flex-direction: column; min-width: 0; }
.ih { height: 27px; background: #cbdcfe; display: flex; align-items: center; padding: 0 6px 1px 13px; gap: 4px; flex: none; color: #111; }
.ih span { flex: 1; letter-spacing: .07px; }
.ih .ic { color: #858b98; }
.panels { flex: 1; padding: 10px 10px 3px; display: flex; flex-direction: column; gap: 13px; }
.row { display: flex; gap: 13px; height: 601px; }
.col { width: 375px; display: flex; flex-direction: column; gap: 13px; }
.panel { border: 1px solid #c9c9c9; box-shadow: inset 0 0 0 2px #e6e6e6; padding: 2px; display: flex; flex-direction: column; background: #fff; }
.net { height: 397px; }
.props { height: 191px; }
.dev { flex: 1; border: 3px solid #4b7dcd; box-shadow: none; padding: 0; }
.bot { height: 287px; }
.tabs { height: 27px; background: #ececec; display: flex; flex: none; color: #8e8e8e; font-weight: 700; letter-spacing: .3px; }
.tab { padding: 0 4px 1px 6px; display: flex; align-items: center; justify-content: space-between; flex: none; }
.tab.sep { background: linear-gradient(#bdbdbd, #bdbdbd) right top / 2px 23px no-repeat; }
.dev .tab.sep:nth-child(5) { letter-spacing: .38px; padding-left: 7px; }
.tab.on { background: #fff; color: #000; }
.tab svg { width: 12px; height: 12px; margin-top: 2px; color: #8a8a8a; }
.ctl { margin-left: auto; display: flex; align-items: center; gap: 4px; padding: 0 6px 1px 0; color: #808080; }
.ph { height: 27px; background: #e6e6e6; display: flex; align-items: center; padding-left: 6px; color: #000; flex: none; }
.ph b { letter-spacing: .3px; padding-bottom: 1px; }
.ptools { height: 34px; border-bottom: 2px solid #e6e6e6; display: flex; align-items: center; flex: none; }
.pt { width: 35px; height: 20px; display: flex; align-items: center; justify-content: center; border-right: 1px solid #dadada; position: relative; }
.gr { margin-left: auto; margin-right: 9px; }
.ptools.right { justify-content: flex-end; }
.ptools.right .gr { margin-left: 9px; }
.tree { flex: 1; overflow: hidden; }
.tr { height: 21px; display: flex; align-items: center; white-space: pre; color: #1f1f1f; padding-bottom: 2px; }
.en { color: #f8a030; font-size: 15px; width: 20px; }
.net .tr { letter-spacing: .27px; }
.in { padding-left: 5px; }
.cv { color: #555; }
.fo { margin-right: 5px; }
em { font-style: normal; color: #8c8c8c; }
.cnt { margin-left: 4px; }
.empty { flex: 1; display: flex; align-items: center; justify-content: center; color: #8c8c8c; letter-spacing: .36px; padding-right: 2px; }
.chip { display: block; }
.chip text { font: 13px "DejaVu Sans", sans-serif; letter-spacing: 0; }
.split { flex: 1; display: flex; min-height: 0; }
.tl { width: 308px; display: flex; flex-direction: column; }
.tl .sb { border-right: 1px solid #e0e0e0; }
.tt { flex: 1; display: flex; min-height: 0; }
.tm { padding-left: 5px; letter-spacing: .17px; }
.tm .fo { margin-right: 0; }
.tx { margin-left: 32px; }
.hl { background: #cbdcfe; height: 21px; line-height: 20px; margin-bottom: -2px; padding-right: 2px; }
.gut { width: 9px; border-right: 1px solid #e0e0e0; background: linear-gradient(#e6e6e6, #e6e6e6) 0 32px / 9px 2px no-repeat; }
.sm { flex: 1; }
.sh { height: 34px; line-height: 34px; border-bottom: 2px solid #e6e6e6; padding-left: 5px; font-weight: 700; color: #000; letter-spacing: .13px; }
.cols { display: flex; gap: 19px; padding: 20px 0 0 15px; }
h4 { margin: 0 0 5px; font-size: 12px; line-height: 17px; height: 18px; border-bottom: 1px solid #c8c8c8; color: #000; }
.sr { height: 23px; padding-left: 21px; display: flex; align-items: center; color: #2a2a2a; }
.met { display: block; margin: 4px 0 0 14px; line-height: 18px; color: #000; letter-spacing: .24px; }
.foot { height: 27px; flex: none; background: repeating-linear-gradient(90deg, #8c8c8c 0 4px, #f6f6f6 4px 8px) 0 0 / 100% 1px no-repeat #f6f6f6; padding: 4px 0 0 3px; }
.foot b { display: block; width: 266px; height: 20px; border: 1px solid #c8c8c8; background: #fff; line-height: 17px; padding-left: 7px; color: #000; letter-spacing: .05px; }
.status { height: 19px; background: #eee; flex: none; }
</style>
